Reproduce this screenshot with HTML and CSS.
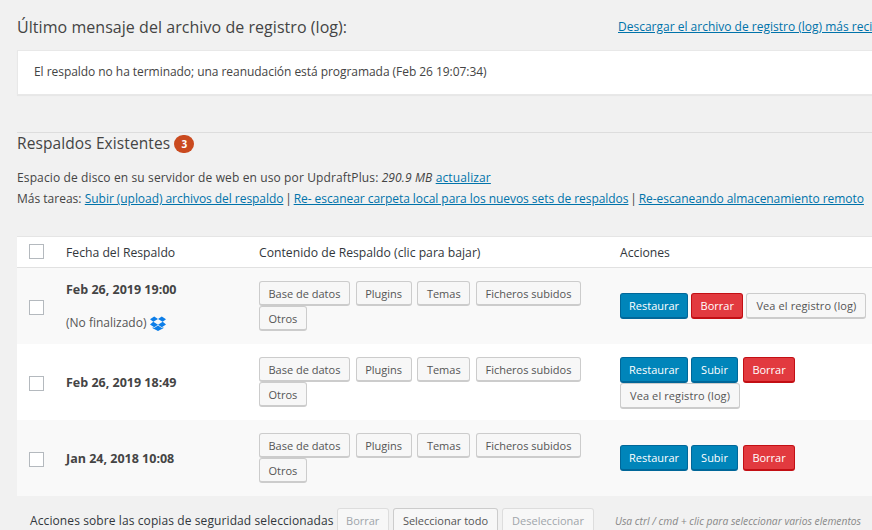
FILE: index.html
```html
<!DOCTYPE html>
<html lang="es">
<head>
<meta charset="utf-8">
<title>UpdraftPlus</title>
<link rel="stylesheet" href="styles.css">
</head>
<body>
<div class="page">
  <div class="log-head">
    <h3 class="log-title">Último mensaje del archivo de registro (log):</h3>
    <a class="link log-link" href="#">Descargar el archivo de registro (log) más reciente</a>
  </div>
  <div class="notice"><p>El respaldo no ha terminado; una reanudación está programada (Feb 26 19:07:34)</p></div>
  <hr class="rule">
  <h3 class="existing"><span class="existing-text">Respaldos Existentes</span> <span class="count">3</span></h3>
  <p class="info usage">Espacio de disco en su servidor de web en uso por UpdraftPlus: <em>290.9 MB</em> <a class="link" href="#">actualizar</a></p>
  <p class="info tasks"><span class="tasks-label">Más tareas:</span> <a class="link" href="#">Subir (upload) archivos del respaldo</a> | <a class="link" href="#">Re- escanear carpeta local para los nuevos sets de respaldos</a> | <a class="link" href="#">Re-escaneando almacenamiento remoto</a></p>

  <div class="table">
    <div class="row head">
      <div class="c-check"><span class="box"></span></div>
      <div class="c-date">Fecha del Respaldo</div>
      <div class="c-content">Contenido de Respaldo (clic para bajar)</div>
      <div class="c-actions">Acciones</div>
    </div>
    <div class="row alt">
      <div class="c-check"><span class="box"></span></div>
      <div class="c-date stacked">
        <strong>Feb 26, 2019 19:00</strong>
        <span class="note">(No finalizado)
          <svg class="dropbox" viewBox="0 0 16 15" width="16" height="15"><path fill="#0d7ee8" d="M4.200 0.500 0 3.200l3.300 2.600L8 3 4.200 0.500Zm7.600 0L8 3l4.700 2.800L16 3.200 11.800 0.500ZM3.300 5.800 0 8.500l4.200 2.700L8 8.700 3.300 5.800Zm9.400 0L8 8.700l3.800 2.500 4.200-2.700-3.300-2.700ZM8 9.500l-3.800 2.500-1.500-1v1.300L8 15l5.300-2.700V11l-1.500 1L8 9.500Z"/></svg>
        </span>
      </div>
      <div class="c-content"><a class="btn" href="#">Base de datos</a><a class="btn" href="#">Plugins</a><a class="btn" href="#">Temas</a><a class="btn" href="#">Ficheros subidos</a><a class="btn" href="#">Otros</a></div>
      <div class="c-actions"><a class="btn act blue" href="#">Restaurar</a><a class="btn act red" href="#">Borrar</a><a class="btn act log" href="#">Vea el registro (log)</a></div>
    </div>
    <div class="row">
      <div class="c-check"><span class="box"></span></div>
      <div class="c-date"><strong>Feb 26, 2019 18:49</strong></div>
      <div class="c-content"><a class="btn" href="#">Base de datos</a><a class="btn" href="#">Plugins</a><a class="btn" href="#">Temas</a><a class="btn" href="#">Ficheros subidos</a><a class="btn" href="#">Otros</a></div>
      <div class="c-actions narrow two-lines"><a class="btn act blue" href="#">Restaurar</a><a class="btn act blue wide" href="#">Subir</a><a class="btn act red" href="#">Borrar</a><a class="btn act log" href="#">Vea el registro (log)</a></div>
    </div>
    <div class="row alt">
      <div class="c-check"><span class="box"></span></div>
      <div class="c-date"><strong>Jan 24, 2018 10:08</strong></div>
      <div class="c-content"><a class="btn" href="#">Base de datos</a><a class="btn" href="#">Plugins</a><a class="btn" href="#">Temas</a><a class="btn" href="#">Ficheros subidos</a><a class="btn" href="#">Otros</a></div>
      <div class="c-actions narrow"><a class="btn act blue" href="#">Restaurar</a><a class="btn act blue wide" href="#">Subir</a><a class="btn act red" href="#">Borrar</a></div>
    </div>
  </div>

  <div class="bulk">
    <span class="bulk-label">Acciones sobre las copias de seguridad seleccionadas</span>
    <a class="btn bulk-btn off" href="#">Borrar</a>
    <a class="btn bulk-btn wider" href="#">Seleccionar todo</a>
    <a class="btn bulk-btn off wider" href="#">Deseleccionar</a>
    <em class="hint">Usa ctrl / cmd + clic para seleccionar varios elementos</em>
  </div>
</div>
</body>
</html>
```
FILE: styles.css
```css
* { box-sizing: border-box; }
html, body { margin: 0; height: 530px; overflow: hidden; }
body {
  background: #f1f1f1;
  color: #444;
  font-family: "Open Sans", "Noto Sans", sans-serif;
  font-size: 12px;
  line-height: 1.4;
}
.page { width: 900px; padding: 0 0 0 17px; }
.link { color: #0073aa; text-decoration: underline; }

.log-head { display: flex; align-items: center; height: 50px; padding-top: 4px; }
.log-title { flex: none; margin: 0; width: 601px; font-size: 16px; font-weight: 500; letter-spacing: 0.05px; color: #444; white-space: nowrap; }
.log-link { font-size: 12px; white-space: nowrap; }

.notice { height: 45px; background: #fff; border: 1px solid #e8e8e8; box-shadow: 0 1px 1px rgba(0,0,0,.04); padding: 0 16px; display: flex; align-items: center; letter-spacing: -0.05px; }
.notice p { margin: 0; }

.rule { margin: 37px 0 0; border: 0; border-top: 1px solid #ddd; }
.existing { margin: 0; height: 22px; display: flex; align-items: center; gap: 4px; font-size: 15.500px; font-weight: 500; color: #444; }
.existing-text { letter-spacing: 0.1px; }
.count { width: 20px; height: 18px; border-radius: 9px; background: #ca4a1f; color: #fff; font-size: 10px; font-weight: 700; display: inline-flex; align-items: center; justify-content: center; }

.info { margin: 0; height: 21px; line-height: 21px; white-space: nowrap; }
.usage { margin-top: 12px; letter-spacing: 0.12px; }
.tasks { word-spacing: -1.300px; }
.tasks-label { word-spacing: 0; }
.tasks .link { word-spacing: 0; letter-spacing: -0.05px; }
.tasks .tasks-label + .link { margin-left: 1.500px; }

.table { margin-top: 27px; border-top: 1px solid #e5e5e5; background: #fff; }
.row { display: grid; grid-template-columns: 49px 193px 361px 1fr; height: 76px; align-items: center; background: #fff; }
.row.alt { background: #f9f9f9; }
.row.head { height: 31px; border-bottom: 1px solid #e1e1e1; color: #32373c; font-size: 12.200px; padding-top: 1px; }
.box { display: block; width: 15px; height: 15px; margin-left: 12px; background: #fff; border: 1px solid #b4b9be; }
.c-check { padding-top: 2px; }
.head .c-check { padding-top: 0; }
.head .box { margin-top: -3px; }
.c-date strong { font-weight: 700; color: #444; font-size: 12.500px; }
.row:not(.head) .c-date { padding-top: 1px; }
.stacked { display: flex; flex-direction: column; gap: 17px; }
.note { display: flex; align-items: center; gap: 4px; color: #555; }
.dropbox { display: block; }

.c-content { width: 340px; line-height: 0; }
.c-actions { line-height: 0; }
.head .c-content, .head .c-actions { line-height: 1.4; }
.c-actions.narrow { width: 190px; }
.two-lines { padding-top: 2px; }
.btn {
  display: inline-block;
  height: 25px;
  line-height: 23px;
  padding: 0 8.500px;
  margin-right: 5.800px;
  border: 1px solid #ccc;
  border-bottom-width: 2px;
  border-radius: 3px;
  background: #f7f7f7;
  color: #555;
  font-size: 11px;
  text-decoration: none;
  white-space: nowrap;
}
.act { margin-right: 3px; vertical-align: top; height: 26px; line-height: 24px; }
.blue { background: #0085ba; border-color: #006799; color: #fff; }
.blue:first-child { padding: 0 8px; }
.red { background: #e23a3f; border-color: #c30f14; color: #fff; }
.wide { margin-right: 5px; padding: 0 9px; }
.log { padding: 0 9px; letter-spacing: 0.1px; }

.bulk { display: flex; align-items: flex-start; padding: 12px 0 0 13px; }
.bulk-label { color: #32373c; margin-right: 3px; line-height: 26px; letter-spacing: 0.1px; }
.bulk-btn { margin-right: 4px; height: 26px; line-height: 24px; background: #f7f7f7; }
.wider { padding: 0 9px; }
.off { color: #a0a5aa; border-color: #ddd; }
.hint { margin-left: 17px; font-size: 10.300px; color: #888; line-height: 26px; white-space: nowrap; }
```
